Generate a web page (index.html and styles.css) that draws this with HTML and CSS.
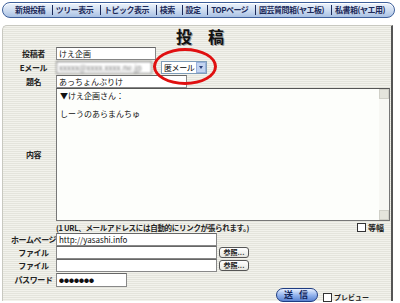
FILE: index.html
```html
<!DOCTYPE html>
<html lang="ja">

<head>
  <meta charset="UTF-8">
  <title>投稿</title>
  <link rel="stylesheet" href="styles.css">
</head>

<body>
  <!-- Menu bar -->
  <nav class="menu">
    <a href="#">新規投稿</a>
    <a href="#">ツリー表示</a>
    <a href="#">トピック表示</a>
    <a href="#">検索</a>
    <a href="#">設定</a>
    <a href="#">TOPページ</a>
    <a href="#">園芸質問箱(ヤエ板)</a>
    <a href="#">私書箱(ヤエ用)</a>
  </nav>

  <!-- Post form -->
  <div class="panel">
    <div class="title">投　稿</div>

    <div class="row">
      <label class="lbl">投稿者</label>
      <input class="field w-name" type="text" value="けえ企画">
    </div>
    <div class="row">
      <label class="lbl">Eメール</label>
      <input class="field w-mail blur" type="text" value="xxxxx@xxxx.xxxx.ne.jp">
      <div class="select">
        <span>匿メール</span>
        <span class="arrow"></span>
      </div>
    </div>
    <div class="row">
      <label class="lbl">題名</label>
      <input class="field w-subj" type="text" value="あっちょんぶりけ">
    </div>
    <div class="row row-body">
      <label class="lbl">内容</label>
      <div class="textarea">
        <div class="text">▼けえ企画さん：<br><br>しーうのあらまんちゅ</div>
        <div class="scroll">
          <span class="sb-btn"></span>
          <span class="sb-btn"></span>
        </div>
      </div>
    </div>
    <div class="row row-note">
      <span class="lbl"></span>
      <span class="note">(1 URL、メールアドレスには自動的にリンクが張られます。)</span>
      <span class="check"><i class="box"></i>等幅</span>
    </div>
    <div class="row row-sm">
      <label class="lbl">ホームページ</label>
      <input class="field w-url" type="text" value="http://yasashi.info">
    </div>
    <div class="row row-sm">
      <label class="lbl">ファイル</label>
      <input class="field w-url" type="text">
      <button class="browse">参照...</button>
    </div>
    <div class="row row-sm">
      <label class="lbl">ファイル</label>
      <input class="field w-url" type="text">
      <button class="browse">参照...</button>
    </div>
    <div class="row row-pass">
      <label class="lbl">パスワード</label>
      <input class="field w-pass" type="text" value="●●●●●●●">
    </div>
    <div class="submit-row">
      <button class="send">送 信</button>
      <span class="check preview"><i class="box"></i>プレビュー</span>
    </div>

    <!-- annotation -->
    <div class="circle"></div>
  </div>
</body>

</html>
```

FILE: styles.css
```css
:root {
  --navy: #1c2a5a;
  --stripe-a: #f2f2ec;
  --stripe-b: #e4e4dc;
}

* {
  margin: 0;
  padding: 0;
  box-sizing: border-box;
  font-family: "Noto Sans CJK JP", "DejaVu Sans", sans-serif;
}

body {
  background: white;
  width: 400px;
  height: 303px;
  overflow: hidden;
}

/* menu bar */
.menu {
  margin: 2px 5px 0 2px;
  height: 16px;
  display: flex;
  align-items: center;
  justify-content: space-between;
  padding: 0 9px 0 12px;
  border: 1px solid #3d5f9a;
  border-radius: 8px;
  background: linear-gradient(#eef4fc, #c8d8ee 60%, #a9c1e4);
  box-shadow: inset 0 1px 0 white;
  white-space: nowrap;
}

.menu a {
  font-size: 8px;
  font-weight: bold;
  color: var(--navy);
  text-decoration: none;
  line-height: 10px;
  letter-spacing: -0.5px;
}

.menu a + a {
  border-left: 1px solid var(--navy);
  padding-left: 3px;
}

/* form panel */
.panel {
  position: relative;
  margin: 7px 0 0 2px;
  width: 391px;
  height: 276px;
  border-top: 1px solid #c8c8c0;
  border-left: 1px solid #c8c8c0;
  border-right: 2px solid #555;
  border-top-left-radius: 5px;
  background: repeating-linear-gradient(var(--stripe-a) 0 1px, var(--stripe-b) 1px 2px);
}

.title {
  height: 20px;
  text-align: center;
  font-size: 16px;
  font-weight: bold;
  line-height: 20px;
  color: #111;
  text-shadow: 1px 1px 0 #999;
  padding-left: 6px;
}

.row {
  display: flex;
  align-items: center;
  height: 14px;
  white-space: nowrap;
}

.row-sm {
  height: 13px;
}

.lbl {
  width: 53px;
  flex: none;
  text-align: center;
  font-size: 8px;
  font-weight: bold;
  color: #222;
  padding-left: 8px;
  letter-spacing: -0.4px;
}

.field {
  height: 13px;
  border: 1px solid #888;
  border-top-color: #666;
  background: white;
  font-size: 8px;
  padding: 0 2px;
  color: #111;
  outline: none;
}

.w-name { width: 100px; }
.w-mail { width: 96px; }
.w-subj { width: 131px; }
.w-url { width: 161px; }
.w-pass { width: 71px; height: 14px; font-size: 5px; font-weight: bold; }

.blur {
  color: #777;
  filter: blur(0.8px);
}

.select {
  margin-left: 9px;
  width: 46px;
  height: 13px;
  border: 1px solid #7f9db9;
  background: white;
  display: flex;
  align-items: center;
  justify-content: space-between;
  font-size: 8px;
  padding-left: 2px;
  letter-spacing: -0.4px;
}

.arrow {
  width: 10px;
  height: 11px;
  background: #c4d4f0;
  border: 1px solid #9ab2dc;
  position: relative;
}

.arrow::after {
  content: "";
  position: absolute;
  left: 2px;
  top: 3px;
  border-style: solid;
  border-color: #2a3f7a transparent transparent;
  border-width: 3px 2px 0;
}

.row-body {
  height: 133px;
}

.textarea {
  width: 334px;
  height: 133px;
  background: #fdfefb;
  border: 1px solid #777;
  border-top-color: #555;
  display: flex;
}

.text {
  flex: 1;
  font-size: 8px;
  line-height: 9px;
  padding: 2px 3px;
  color: #111;
}

.scroll {
  width: 10px;
  background: #f8f8f4;
  display: flex;
  flex-direction: column;
  justify-content: space-between;
}

.sb-btn {
  height: 10px;
  background: #e4e4dc;
  border: 1px solid #d0d0c8;
}

.row-note {
  height: 11px;
  margin-top: 1px;
}

.note {
  flex: 1;
  font-size: 7.5px;
  font-weight: bold;
  color: #222;
  letter-spacing: -0.3px;
}

.check {
  display: flex;
  align-items: center;
  gap: 2px;
  font-size: 8px;
  font-weight: bold;
  color: #222;
  margin-right: 7px;
}

.box {
  width: 9px;
  height: 9px;
  border: 1px solid #333;
  background: white;
}

.browse {
  margin-left: 2px;
  width: 30px;
  height: 11px;
  border: 1px solid #555;
  border-radius: 3px;
  background: linear-gradient(#fff, #e6e6e0);
  font-size: 7px;
  font-weight: bold;
  color: #222;
  line-height: 9px;
}

.row-pass {
  height: 15px;
}

.submit-row {
  display: flex;
  align-items: flex-end;
  height: 15px;
  padding-left: 273px;
  white-space: nowrap;
}

.send {
  width: 42px;
  height: 14px;
  border: 1px solid #1e3c82;
  border-radius: 7px;
  background: linear-gradient(#e8f0ff, #8fb0ec 55%, #5a82d0);
  color: #10245a;
  font-size: 9px;
  font-weight: bold;
  letter-spacing: 2px;
  line-height: 12px;
}

.preview {
  margin-left: 5px;
  font-size: 7px;
}

/* red annotation ellipse */
.circle {
  position: absolute;
  left: 150px;
  top: 22px;
  width: 64px;
  height: 37px;
  border: 3px solid #e01010;
  border-radius: 50%;
}
```
